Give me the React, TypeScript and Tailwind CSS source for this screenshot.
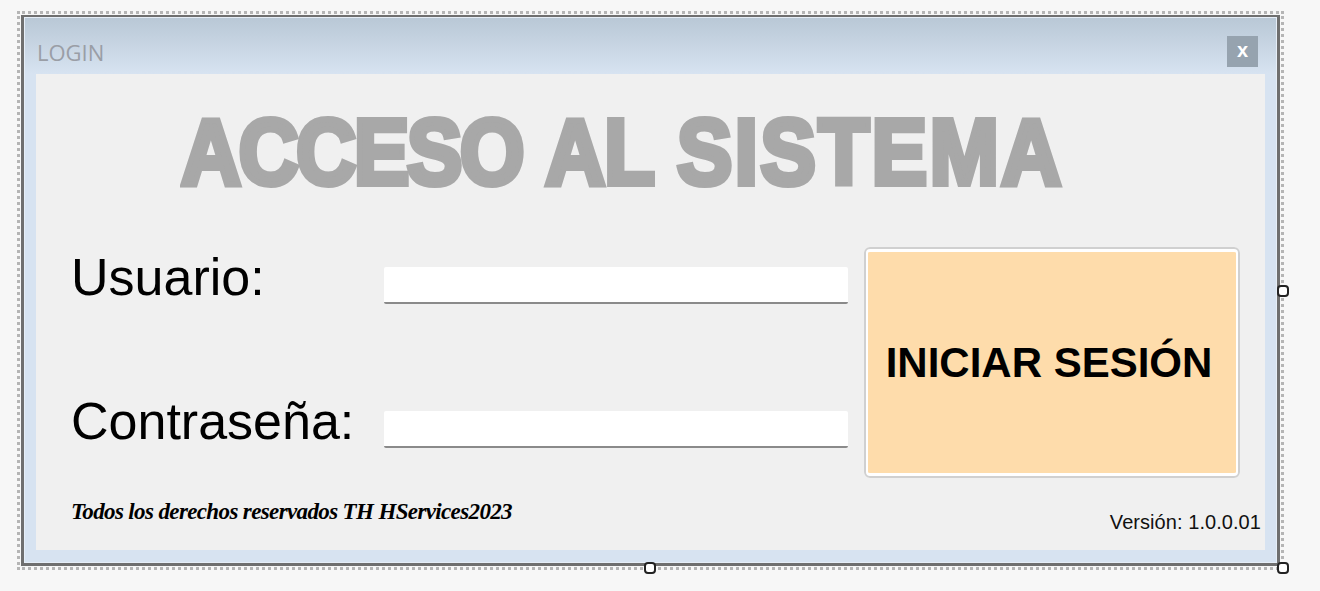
function Handle({ className }: { className: string }) {
  return <div className={`absolute w-[12px] h-[12px] bg-white border-2 border-[#222] rounded-[4px] ${className}`} />;
}

function Field({ label }: { label: string }) {
  return (
    <div className="flex items-start h-[60px]">
      <span className="w-[313px] text-[52px] leading-[60px] text-black font-['Liberation_Sans',sans-serif]">{label}</span>
      <div className="mt-[20px] w-[464px] h-[37px] bg-white rounded-[2px] border-b-2 border-[#8a8a8a]" />
    </div>
  );
}

export default function App() {
  return (
    <div className="w-full h-screen bg-[#f7f7f7] pl-[17px] pt-[11px] overflow-hidden">
      <div className="relative w-[1267px] h-[559px] p-px border-[3px] border-dotted border-[#b5b5b5]">
        <div className="w-full h-full border-[3px] border-t-2 border-[#6f6f6f]">
          <div className="w-full h-full flex flex-col bg-[#d7e3f1] pl-[11px] pr-[11px] pb-[12px] border border-[#e6eef7]">
            <div className="-ml-[11px] -mr-[11px] h-[56px] shrink-0 pl-[12px] pr-[18px] bg-gradient-to-b from-[#b9c8d6] to-[#d7e3f1] flex items-start justify-between">
              <span className="mt-[17px] text-[22px] leading-[34px] text-[#9a9ea6] font-['Open_Sans',sans-serif]">LOGIN</span>
              <button className="mt-[18px] w-[31px] h-[31px] pb-[3px] bg-[#96a3af] flex items-center justify-center text-white text-[20px] leading-none font-bold font-['Liberation_Sans',sans-serif]">
                x
              </button>
            </div>
            <div className="flex-1 bg-[#f0f0f0] pl-[35px] flex flex-col">
              <h1 className="mt-[33px] ml-[110px] h-[66px] self-start origin-left scale-x-[0.9] whitespace-nowrap text-[92px] leading-[90px] font-bold text-[#a8a8a8] [-webkit-text-stroke:6px_#a8a8a8] font-['Liberation_Sans',sans-serif]">
                <span className="tracking-[-2.4px]">ACCESO</span> <span className="tracking-[-1px]">AL</span>{" "}
                <span className="tracking-[3px]">SISTEMA</span>
              </h1>
              <div className="mt-[74px] flex items-start">
                <div className="w-[777px] flex flex-col gap-[84px]">
                  <Field label="Usuario:" />
                  <Field label="Contraseña:" />
                </div>
                <button className="ml-[16px] w-[376px] h-[231px] pr-[6px] rounded-[6px] bg-[#fedcab] border-x-[4px] border-y-[5px] border-white outline-2 -outline-offset-2 outline-[#d0d0d0] text-black text-[42px] font-bold font-['Liberation_Sans',sans-serif]">
                  INICIAR SESIÓN
                </button>
              </div>
              <div className="mt-[20px] flex items-start justify-between pr-[4px]">
                <span className="text-[23px] leading-[28px] font-bold italic tracking-[-0.63px] text-black font-['Liberation_Serif',serif]">
                  Todos los derechos reservados TH HServices2023
                </span>
                <span className="mt-[10px] text-[20px] leading-[28px] tracking-[0.06px] text-[#111] font-['Liberation_Sans',sans-serif]">
                  Versión: 1.0.0.01
                </span>
              </div>
            </div>
          </div>
        </div>
        <Handle className="top-[271px] -right-[8px]" />
        <Handle className="-bottom-[7px] left-[624px]" />
        <Handle className="-bottom-[7px] -right-[8px]" />
      </div>
    </div>
  );
}
